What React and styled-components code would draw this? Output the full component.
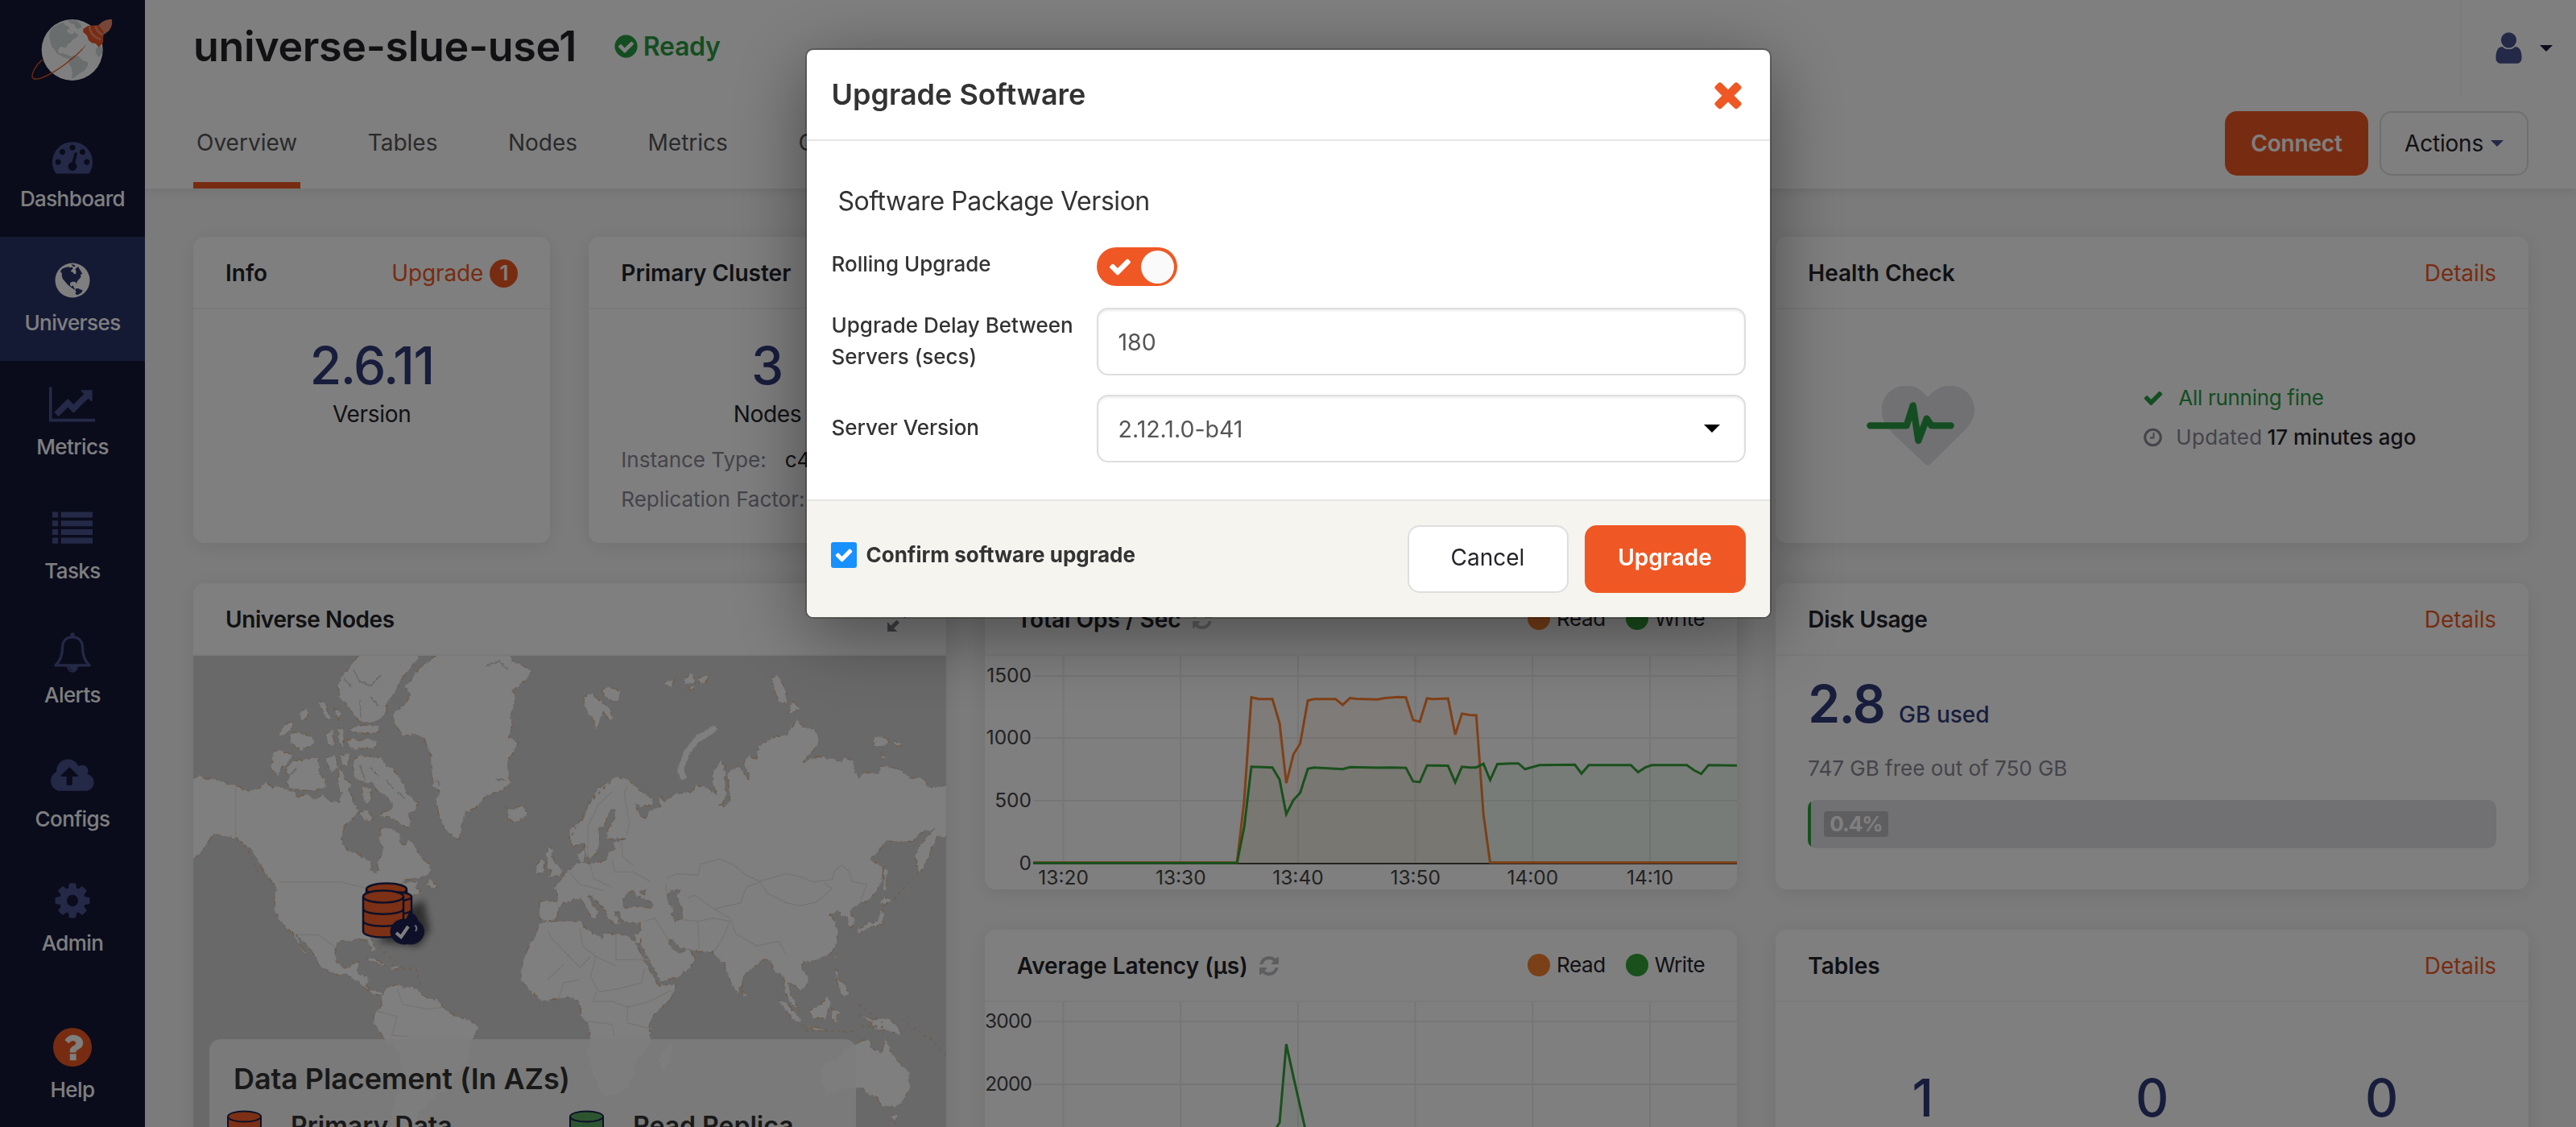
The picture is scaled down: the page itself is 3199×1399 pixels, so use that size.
import React from "react";
import styled, { createGlobalStyle } from "styled-components";

const Global = createGlobalStyle`
  *, *::before, *::after { box-sizing: border-box; }
  html, body, #root { margin: 0; height: 100%; }
  body {
    overflow: hidden;
    background: #f7f7f7;
    color: #232329;
    font-family: Inter, "Liberation Sans", sans-serif;
    font-size: 26px;
  }
  svg { display: block; flex: none; }
`;

const orange = "#ef5824";
const navy = "#303a78";
const green = "#289b42";
const muted = "#888894";

/* ---------- icons ---------- */

const ICONS = {
  dashboard: [1792, "M384 1152q0-53-37.5-90.5t-90.5-37.5-90.5 37.5-37.5 90.5 37.5 90.5 90.5 37.5 90.5-37.5 37.5-90.5zm192-448q0-53-37.5-90.5t-90.5-37.5-90.5 37.5-37.5 90.5 37.5 90.5 90.5 37.5 90.5-37.5 37.5-90.5zm428 481l101-382q6-26-7.5-48.5t-38.5-29.5-48 6.5-30 39.5l-101 382q-60 5-107 43.5t-63 98.5q-20 77 20 146t117 89 146-20 89-117q16-60-6-117t-72-91zm660-33q0-53-37.5-90.5t-90.5-37.5-90.5 37.5-37.5 90.5 37.5 90.5 90.5 37.5 90.5-37.5 37.5-90.5zm-640-640q0-53-37.5-90.5t-90.5-37.5-90.5 37.5-37.5 90.5 37.5 90.5 90.5 37.5 90.5-37.5 37.5-90.5zm448 192q0-53-37.5-90.5t-90.5-37.5-90.5 37.5-37.5 90.5 37.5 90.5 90.5 37.5 90.5-37.5 37.5-90.5zm320 448q0 261-141 483-19 29-54 29h-1402q-35 0-54-29-141-221-141-483 0-182 71-348t191-286 286-191 348-71 348 71 286 191 191 286 71 348z"],
  chart: [2048, "M2048 1536v128h-2048v-1536h128v1408h1920zm-128-1248v435q0 21-19.5 29.5t-35.5-7.5l-121-121-633 633q-10 10-23 10t-23-10l-233-233-416 416-192-192 585-585q10-10 23-10t23 10l233 233 464-464-121-121q-16-16-7.5-35.5t29.5-19.5h435q14 0 23 9t9 23z"],
  list: [1792, "M0 1312h256v256h-256zM0 928h256v256h-256zM0 544h256v256h-256zM0 160h256v256h-256zM384 1312h1408v256h-1408zM384 928h1408v256h-1408zM384 544h1408v256h-1408zM384 160h1408v256h-1408z"],
  cloud: [1920, "M1216 864q0-14-9-23l-352-352q-9-9-23-9t-23 9l-351 351q-10 12-10 24 0 14 9 23t23 9h224v352q0 13 9.5 22.5t22.5 9.5h192q13 0 22.5-9.5t9.5-22.5v-352h224q13 0 22.5-9.5t9.5-22.5zm704 288q0 159-112.5 271.5t-271.5 112.5h-1088q-185 0-316.5-131.5t-131.5-316.5q0-130 70-240t188-165q-2-30-2-43 0-212 150-362t362-150q156 0 285.5 87t188.5 231q71-62 166-62 106 0 181 75t75 181q0 76-41 138 130 31 213.5 135.5t83.5 238.5z"],
  cog: [1792, "M1152 896q0-106-75-181t-181-75-181 75-75 181 75 181 181 75 181-75 75-181zm512-109v222q0 12-8 23t-20 13l-185 28q-19 54-39 91 35 50 107 138 10 12 10 25t-9 23q-27 37-99 108t-94 71q-12 0-26-9l-138-108q-44 23-91 38-16 136-29 186-7 28-36 28h-222q-14 0-24.5-8.5t-11.5-21.5l-28-184q-49-16-90-37l-141 107q-10 9-25 9-14 0-25-11-126-114-165-168-7-10-7-23 0-12 8-23 15-21 51-66.5t54-70.5q-27-50-41-99l-183-27q-13-2-21-12.5t-8-23.5v-222q0-12 8-23t19-13l186-28q14-46 39-92-40-57-107-138-10-12-10-24 0-10 9-23 26-36 98.5-107.5t94.5-71.5q13 0 26 10l138 107q44-23 91-38 16-136 29-186 7-28 36-28h222q14 0 24.5 8.5t11.5 21.5l28 184q49 16 90 37l142-107q9-9 24-9 13 0 25 10 129 119 165 170 7 8 7 22 0 12-8 23-15 21-51 66.5t-54 70.5q26 50 41 98l183 28q13 2 21 12.5t8 23.5z"],
  refresh: [1792, "M1639 1056q0 5-1 7-64 268-268 434.5t-478 166.5q-146 0-282.5-55t-243.5-157l-129 129q-19 19-45 19t-45-19-19-45v-448q0-26 19-45t45-19h448q26 0 45 19t19 45-19 45l-137 137q71 66 161 102t187 36q134 0 250-65t186-179q11-17 53-117 8-23 30-23h192q13 0 22.5 9.5t9.5 22.5zm25-800v448q0 26-19 45t-45 19h-448q-26 0-45-19t-19-45 19-45l138-138q-148-137-349-137-134 0-250 65t-186 179q-11 17-53 117-8 23-30 23h-199q-13 0-22.5-9.5t-9.5-22.5v-7q65-268 270-434.5t480-166.5q146 0 284 55.5t245 156.5l130-129q19-19 45-19t45 19 19 45z"],
  check: [1792, "M1671 566q0 40-28 68l-724 724-136 136q-28 28-68 28t-68-28l-136-136-362-362q-28-28-28-68t28-68l136-136q28-28 68-28t68 28l294 295 656-657q28-28 68-28t68 28l136 136q28 28 28 68z"],
  close: [1792, "M1490 1322q0 40-28 68l-136 136q-28 28-68 28t-68-28l-294-294-294 294q-28 28-68 28t-68-28l-136-136q-28-28-28-68t28-68l294-294-294-294q-28-28-28-68t28-68l136-136q28-28 68-28t68 28l294 294 294-294q28-28 68-28t68 28l136 136q28 28 28 68t-28 68l-294 294 294 294q28 28 28 68z"],
  user: [1792, "M1536 1399q0 109-62.5 187t-150.5 78h-854q-88 0-150.5-78t-62.5-187q0-85 8.5-160.5t31.5-152 58.5-131 94-89 134.5-34.5q131 128 313 128t313-128q76 0 134.5 34.5t94 89 58.5 131 31.5 152 8.5 160.5zm-256-887q0 159-112.5 271.5t-271.5 112.5-271.5-112.5-112.5-271.5 112.5-271.5 271.5-112.5 271.5 112.5 112.5 271.5z"],
  checkCircle: [1792, "M1412 734q0-28-18-46l-91-90q-19-19-45-19t-45 19l-408 407-226-226q-19-19-45-19t-45 19l-91 90q-18 18-18 46 0 27 18 45l362 362q19 19 45 19 27 0 46-19l543-543q18-18 18-45zm252 162q0 209-103 385.5t-279.5 279.5-385.5 103-385.5-103-279.5-279.5-103-385.5 103-385.5 279.5-279.5 385.5-103 385.5 103 279.5 279.5 103 385.5z"],
};

function Icon({ name, size, color }) {
  const [w, d] = ICONS[name];
  return (
    <svg width={(w / 1792) * size} height={size} viewBox={`0 0 ${w} 1792`} fill={color}>
      <path d={d} />
    </svg>
  );
}

function GlobeIcon() {
  return (
    <svg width="44" height="50" viewBox="205 966 132 150">
      <circle cx="271" cy="1041" r="64.5" fill="#fff" />
      <g fill="#2b3468">
        <polygon points="226,1008 232,998 244,993 256,991 264,994 270,991 273,998 268,1002 264,1008 272,1010 276,1016 283,1018 285,1008 281,1000 287,994 292,990 298,1000 304,1010 308,1017 300,1020 303,1027 298,1034 292,1040 288,1046 287,1053 281,1046 270,1046 263,1050 262,1058 266,1064 274,1060 275,1066 279,1072 280,1076 272,1072 262,1064 252,1056 244,1046 235,1036 231,1024 232,1016" />
        <polygon points="266,981 278,983 282,990 274,990" />
        <polygon points="283,1072 292,1071 300,1075 309,1078 306,1085 298,1091 288,1096 281,1090 285,1084 281,1078" />
      </g>
    </svg>
  );
}

function BellIcon() {
  return (
    <svg width="50" height="50" viewBox="196 974 150 152" fill="none">
      <circle cx="271" cy="983" r="8" fill="#48528f" />
      <path
        stroke="#48528f"
        strokeWidth="10"
        strokeLinejoin="round"
        d="M271 992c-24 0-38 16-38 40 0 33-10 52-26 66h128c-16-14-26-33-26-66 0-24-14-40-38-40z"
      />
      <path fill="#48528f" d="M250 1102h42a21 23 0 0 1-42 0z" />
      <path stroke="#151838" strokeWidth="3" d="M257 1104a14 14 0 0 0 14 14" />
    </svg>
  );
}

function HelpIcon() {
  return (
    <svg width="50" height="50" viewBox="0 0 50 50">
      <circle cx="25" cy="25" r="24" fill={orange} />
      <path
        fill="#fff"
        d="M15.6 16.3C18.4 11.6 22 9.800 26.200 9.800c6.500 0 12 4.200 12 9.800 0 8-8.800 7.700-8.800 11.300v.6h-7.600v-2.300c0-5.300 7.500-6.200 7.500-9.300 0-1.800-1.600-2.900-3.600-2.900-2.200 0-3.600 1-5.200 3.300zM21.800 33.300h7.800v8h-7.800z"
      />
    </svg>
  );
}

function PlanetLogo() {
  return (
    <svg width="104" height="80" viewBox="114 66 312 240">
      <circle cx="269" cy="186" r="114" fill="#fff" />
      <g fill="#d3dbdc">
        <path d="M187 112l14-12 20-12 16-4 6 10 12 4 4 10-10 4 6 12 14 4 8-8 12 6 2 8-10 8-8 4-10 12-12 8-4 10-8 2-8-4-8 2-6 8 0 10 8 6 12-2 8 6 12 2 12 8-4 6-14-2-12-4-12-6-16-10-8-14-8-8-8-20-4-22z" />
        <path d="M252 78l16-4 20 4 12 12 4 12-14 6-10-6-4-12-14-4z" />
        <path d="M262 212l14-6 18 4 14 14 20 8-2 14-12 18-16 8-10 8-14 10-8 4 4-22-4-20-10-16 0-12z" />
        <path d="M360 178l16-6 6 14-2 14-12 12-10-12-2-12z" />
      </g>
      <path fill="none" stroke={orange} strokeWidth="4" d="M158 222c-30 26-46 62-34 70 18 12 90-26 142-72" />
      <path fill={orange} d="M262 220c24-18 42-36 60-56-12 20-34 42-58 60z" />
      <path fill="#f08c70" d="M366 96c12-16 30-24 50-24 4 14 0 32-12 44l-22 16-32-26z" />
      <path fill={orange} d="M310 108l18-12 40-2 18 24-2 40-16 18-12-14-14-2-12-10-6-18-14-12z" />
      <path fill="none" stroke="#f08c70" strokeWidth="9" d="M334 98c0 22 16 42 42 48M356 96c2 18 12 26 28 34" />
    </svg>
  );
}

/* ---------- sidebar ---------- */

const Page = styled.div`
  display: flex;
  height: 1399px;
  overflow: hidden;
`;

const Sidebar = styled.nav`
  display: flex;
  flex-direction: column;
  flex: none;
  width: 180px;
  background: #151838;
`;

const LogoBox = styled.div`
  flex: none;
  height: 140px;
  padding: 22px 0 0 38px;
`;

const NavItem = styled.a`
  display: flex;
  flex-direction: column;
  align-items: center;
  flex: none;
  gap: 12px;
  height: ${(p) => (p.$last ? 150 : 154)}px;
  padding-top: 29px;
  margin-top: ${(p) => (p.$last ? "28px" : 0)};
  background: ${(p) => (p.$active ? "#2b3468" : "transparent")};
  color: #fff;
  font-weight: 500;
  line-height: 32px;
  letter-spacing: -0.6px;
`;

const NAV = [
  ["Dashboard", <Icon name="dashboard" size={50} color="#48528f" />],
  ["Universes", <GlobeIcon />],
  ["Metrics", <Icon name="chart" size={50} color="#48528f" />],
  ["Tasks", <Icon name="list" size={50} color="#48528f" />],
  ["Alerts", <BellIcon />],
  ["Configs", <Icon name="cloud" size={50} color="#48528f" />],
  ["Admin", <Icon name="cog" size={50} color="#48528f" />],
  ["Help", <HelpIcon />],
];

/* ---------- header ---------- */

const Main = styled.div`
  flex: 1;
  display: flex;
  flex-direction: column;
  min-width: 0;
`;

const Header = styled.header`
  display: flex;
  flex-direction: column;
  justify-content: space-between;
  flex: none;
  height: 234px;
  background: #fff;
  box-shadow: 0 2px 14px rgba(0, 0, 0, 0.1);
`;

const TitleRow = styled.div`
  display: flex;
  height: 119px;
  padding-left: 57px;
`;

const Title = styled.h1`
  margin: 0;
  padding: 28px 0 0 3px;
  font-size: 52px;
  line-height: 60px;
  font-weight: 600;
  letter-spacing: -0.35px;
`;

const Status = styled.div`
  display: flex;
  align-items: center;
  gap: 5px;
  height: 40px;
  margin: 37px 0 0 45px;
  color: ${green};
  font-size: 32px;
  font-weight: 600;
  letter-spacing: -0.3px;
`;

const UserMenu = styled.div`
  display: flex;
  align-items: center;
  gap: 16px;
  width: 144px;
  margin-left: auto;
  padding-left: 36px;
  border-left: 2px solid #f4f4f6;
`;

const Caret = styled.span`
  width: 0;
  height: 0;
  border: ${(p) => p.$size}px solid transparent;
  border-top-color: ${(p) => p.$color};
  border-bottom: 0;
`;

const TabRow = styled.div`
  display: flex;
  height: 115px;
  padding: 0 59px 0 60px;
`;

const Tab = styled.a`
  margin-right: 79.5px;
  padding: 32px 4px 0;
  border-bottom: 8px solid ${(p) => (p.$active ? orange : "transparent")};
  color: #555;
  font-size: 28px;
  line-height: 52px;
`;

const HeaderButtons = styled.div`
  display: flex;
  gap: 14px;
  margin: 19px 0 0 auto;
`;

const HeaderButton = styled.button`
  display: flex;
  align-items: center;
  justify-content: center;
  gap: 9px;
  width: ${(p) => p.$width}px;
  height: 80px;
  padding: 0;
  border: 2px solid ${(p) => (p.$primary ? orange : "#dedee0")};
  border-radius: 15px;
  background: ${(p) => (p.$primary ? orange : "#fff")};
  color: ${(p) => (p.$primary ? "#fff" : "#232329")};
  font: ${(p) => (p.$primary ? 600 : 400)} 28px Inter, sans-serif;
  letter-spacing: -0.2px;
`;

/* ---------- cards ---------- */

const Content = styled.main`
  display: grid;
  grid-template-columns: repeat(3, 1fr);
  grid-auto-rows: 380px;
  gap: 50px 48px;
  padding: 60px 59px 0 60px;
`;

const Split = styled.div`
  display: grid;
  grid-template-columns: 1fr 1fr;
  gap: 48px;
`;

const Card = styled.section`
  display: flex;
  flex-direction: column;
  min-width: 0;
  overflow: hidden;
  border-radius: 14px;
  background: #fff;
`;

const Lift = styled.div`
  display: grid;
  grid-row: ${(p) => (p.$tall ? "span 2" : "auto")};
  min-width: 0;
  border-radius: 14px;
  box-shadow: 0 4px 26px rgba(0, 0, 0, 0.09);
`;

const CardHeader = styled.header`
  display: flex;
  align-items: center;
  justify-content: space-between;
  flex: none;
  height: 90px;
  padding: 0 40px;
  border-bottom: 2px solid #f4f4f6;
`;

const CardTitle = styled.h3`
  display: flex;
  align-items: center;
  gap: 12px;
  margin: 0;
  padding-top: 1px;
  font-size: 28px;
  line-height: 34px;
  font-weight: 600;
  letter-spacing: ${(p) => p.$tracking || 0}px;
`;

const CardLink = styled.a`
  display: flex;
  align-items: center;
  gap: 8px;
  padding-top: 2px;
  color: ${orange};
  font-size: 28px;
  line-height: 34px;
  letter-spacing: -0.1px;
`;

const CountBadge = styled.span`
  display: grid;
  place-items: center;
  width: 35px;
  height: 35px;
  border-radius: 50%;
  background: ${orange};
  color: #fff;
  font-size: 26px;
  font-weight: 600;
`;

const CenterBody = styled.div`
  display: flex;
  flex-direction: column;
  align-items: center;
  padding-top: 30px;
`;

const BigNumber = styled.div`
  color: ${navy};
  font-size: 64px;
  line-height: 80px;
  font-weight: 500;
  letter-spacing: ${(p) => p.$tracking || 0}px;
`;

const BigLabel = styled.div`
  font-size: 28px;
  line-height: 34px;
  margin-top: 3px;
  letter-spacing: -0.3px;
`;

const Facts = styled.dl`
  display: flex;
  flex-direction: column;
  margin: 15px 0 0;
  padding: 0 40px;
`;

const Fact = styled.div`
  display: flex;
  gap: 23px;
  line-height: 49px;
  white-space: nowrap;
`;

const Muted = styled.span`
  color: ${muted};
  letter-spacing: ${(p) => p.$tracking || 0}px;
`;

const HealthBody = styled.div`
  display: flex;
  align-items: center;
  gap: 206px;
  flex: 1;
  padding: 0 0 5px 110px;
`;

const HealthList = styled.div`
  display: flex;
  flex-direction: column;
  padding-bottom: 17px;
`;

const HealthRow = styled.div`
  display: flex;
  align-items: center;
  gap: ${(p) => p.$gap}px;
  height: 49px;
  color: ${(p) => p.$color};
  letter-spacing: ${(p) => p.$tracking || 0}px;
`;

const Strong = styled.span`
  margin-left: -9px;
  color: #232329;
  font-weight: 500;
`;

const DiskBody = styled.div`
  display: flex;
  flex-direction: column;
  padding: 20px 40px;
`;

const DiskUsed = styled.div`
  display: flex;
  align-items: baseline;
  gap: 18px;
  color: ${navy};
  font-size: 28px;
  font-weight: 500;
  line-height: 80px;
`;

const DiskValue = styled.span`
  font-size: 64px;
  font-weight: 600;
  letter-spacing: -1.6px;
`;

const DiskFree = styled.div`
  margin-top: 3px;
  line-height: 48px;
  color: ${muted};
`;

const DiskBar = styled.div`
  display: flex;
  align-items: center;
  gap: 16px;
  height: 60px;
  margin-top: 15px;
  overflow: hidden;
  border-radius: 10px;
  background: #e3e3e8;
`;

const DiskFill = styled.div`
  align-self: stretch;
  width: 4px;
  background: #2f9e3a;
`;

const DiskPercent = styled.span`
  padding: 0 7px;
  border-radius: 4px;
  background: #bdbdc0;
  color: #fff;
  font-weight: 700;
  line-height: 32px;
  letter-spacing: -1px;
`;

const TableCounts = styled.div`
  display: grid;
  grid-template-columns: repeat(3, 1fr);
  padding: 79px 40px 0;
  text-align: center;
`;

const Legend = styled.div`
  display: flex;
  align-items: center;
  gap: 25px;
`;

const LegendItem = styled.span`
  display: flex;
  align-items: center;
  gap: 8px;
  line-height: 34px;
  letter-spacing: -0.4px;
`;

const Dot = styled.i`
  width: 28px;
  height: 28px;
  border-radius: 50%;
  background: ${(p) => p.$color};
`;

/* ---------- charts ---------- */

const READ = "#ff8130";
const WRITE = "#32a038";

const opsRead = "130,787 527,787 541,605 555,299 570,304 596,304 610,375 623,552 637,467 650,436 665,308 677,304 719,304 733,321 747,301 760,303 801,305 815,301 842,298 856,299 870,366 883,371 897,302 911,304 938,302 952,409 965,347 980,351 993,352 1007,645 1020,787 1501,787";
const opsWrite = "130,788 527,788 541,683 555,504 596,506 610,542 623,644 637,602 650,581 665,510 677,506 733,511 747,505 801,507 828,506 856,507 870,547 883,549 897,500 938,501 952,550 965,504 980,506 993,506 1007,495 1020,543 1034,496 1061,494 1075,494 1088,511 1102,505 1116,499 1185,498 1198,524 1212,499 1294,499 1308,520 1322,506 1335,499 1403,499 1418,515 1431,525 1445,499 1501,500";
const latencyWrite = "600,785 605,544 610,532 623,300 637,397 659,544 675,690 700,780 1501,785";

const TICKS_X = ["13:20", "13:30", "13:40", "13:50", "14:00", "14:10"];

function Chart({ yTicks, series, height }) {
  return (
    <svg width="934.67" height={height} viewBox={`0 0 934.67 ${height}`}>
      <g stroke="#ececee" strokeWidth="2">
        {TICKS_X.map((t, i) => (
          <path key={t} d={`M${97.6 + i * 145.7} 0V257`} />
        ))}
        {yTicks.map((t) => (
          <path key={t.label} d={`M60 ${t.y}H935`} />
        ))}
      </g>
      <path d="M60 258H935" stroke="#444" strokeWidth="2" />
      <svg width="934.67" height="290" viewBox="36 176 1465.600 690" preserveAspectRatio="none">
        {series.map((s) => (
          <g key={s.color}>
            <polygon points={`${s.points} 1501,789 130,789`} fill={s.color} fillOpacity="0.07" />
            <polyline
              points={s.points}
              fill="none"
              stroke={s.color}
              strokeWidth="3"
              vectorEffect="non-scaling-stroke"
            />
          </g>
        ))}
      </svg>
      <g fill="#444" fontFamily="Inter, sans-serif" fontSize="24.500">
        {yTicks.map((t) => (
          <text key={t.label} x="58" y={t.y + 8.500} textAnchor="end" letterSpacing={t.tracking || 0}>
            {t.label}
          </text>
        ))}
        {TICKS_X.map((t, i) => (
          <text key={t} x={97.6 + i * 145.7} y="284" textAnchor="middle">
            {t}
          </text>
        ))}
      </g>
    </svg>
  );
}

function ChartCard({ title, ...chart }) {
  return (
    <Lift>
      <Card>
        <CardHeader>
          <CardTitle>
            {title}
            <Icon name="refresh" size={28} color="#bcbcc0" />
          </CardTitle>
          <Legend>
            <LegendItem><Dot $color="#f5812f" />Read</LegendItem>
            <LegendItem><Dot $color={WRITE} />Write</LegendItem>
          </Legend>
        </CardHeader>
        <Chart height={290} {...chart} />
      </Card>
    </Lift>
  );
}

/* ---------- map ---------- */

const WEST = [
  "0,435 25,427 45,435 80,437 125,453 160,458 200,477 240,470 272,450 300,465 320,462 350,472 378,480 385,495 430,487 445,505 480,490 510,510 545,512 550,490 570,470 590,490 600,520 615,540 590,570 565,590 553,620 555,650 580,672 610,680 640,697 660,705 662,730 680,747 690,735 685,710 700,690 708,665 695,640 697,600 725,595 750,605 768,615 770,645 790,652 800,640 815,640 830,665 850,695 880,715 885,740 865,750 845,760 790,765 775,778 820,770 835,775 825,790 845,800 835,812 800,820 790,850 770,865 745,890 700,920 660,945 665,965 678,990 670,998 655,975 650,962 620,958 600,955 590,965 560,962 535,970 528,1000 535,1035 560,1052 585,1050 595,1035 618,1032 610,1060 620,1075 645,1075 650,1090 645,1110 660,1125 690,1128 705,1135 695,1140 670,1135 640,1118 615,1095 590,1085 570,1072 540,1075 500,1060 465,1040 460,1020 430,985 400,955 385,945 395,970 425,1010 415,1005 390,970 372,940 350,925 325,900 305,865 303,820 310,790 290,765 262,738 240,700 215,665 190,650 165,632 130,625 105,622 75,615 50,650 20,685 -20,710 -20,435",
  "865,780 880,765 890,770 905,780 908,793 885,790",
  "600,375 625,360 660,365 700,370 720,395 750,410 780,450 795,485 835,515 825,545 800,545 810,570 805,597 775,585 745,565 720,560 695,558 705,545 735,540 745,520 715,490 690,480 670,450 620,445 600,430 595,400",
  "620,545 650,540 670,570 640,575",
  "345,400 370,380 410,375 440,370 465,370 470,420 490,440 495,465 440,475 410,475 370,470 345,450 360,430 345,415",
  "300,345 330,345 370,360 350,390 330,400 315,425 290,405",
  "370,285 400,290 440,300 455,320 400,345 365,320 360,300",
  "318,290 345,260 372,250 365,275 330,298",
  "400,215 425,210 425,240 400,250",
  "465,185 490,190 510,240 500,245 480,215",
  "525,205 550,225 540,245",
  "495,290 520,280 525,325 505,330",
  "540,270 560,280 560,335 545,320",
  "575,310 600,305 610,315 650,305 682,315 680,335 600,340 580,330",
  "580,275 630,262 690,265 690,285 650,290 600,285",
  "495,370 530,360 540,400 515,415 500,390",
  "550,360 585,355 575,395 555,390",
  "545,400 570,440 590,455 575,480 545,480 540,440",
  "630,460 660,470 665,500 645,520 630,490",
  "640,20 840,20 840,45 805,80 770,120 745,165 720,190 720,220 700,240 670,255 620,250 600,230 575,200 545,170 540,130 560,95 580,80 600,50",
  "845,75 880,55 920,20 1170,20 1190,55 1230,70 1262,85 1240,115 1190,150 1200,180 1180,240 1190,260 1175,300 1210,320 1190,355 1170,380 1175,420 1180,450 1150,475 1090,492 1055,530 1015,545 1000,590 990,633 960,620 935,595 915,555 905,500 920,480 895,460 890,420 885,360 860,305 825,290 785,298 750,260 745,225 790,195 810,160 790,140",
  "1160,528 1180,540 1225,525 1245,548 1225,568 1195,578 1170,565 1175,550",
  "705,1135 720,1118 755,1105 790,1115 830,1115 850,1135 870,1150 910,1155 935,1185 960,1200 1000,1215 1040,1225 1062,1245 1050,1270 1035,1290 1030,1340 1010,1380 970,1400 955,1440 935,1455 900,1465 905,1475 870,1490 875,1510 840,1520 830,1580 735,1580 745,1490 765,1440 770,1370 765,1320 720,1295 695,1260 670,1230 675,1200 700,1180",
  "640,1020 680,1022 720,1045 700,1040 660,1028",
  "735,1045 775,1050 760,1055 740,1055",
  "1325,655 1340,670 1335,690 1350,710 1375,735 1365,752 1325,755 1335,735 1320,725 1315,680",
  "1280,715 1300,700 1312,710 1305,740 1278,745",
];

const EAST = [
  "-90,835 -20,835 -25,800 -40,790 -10,770 0,745 20,735 45,715 60,710 52,680 75,665 80,690 70,710 105,712 140,705 160,700 165,680 190,668 185,645 235,630 165,632 162,605 190,565 195,540 175,537 162,560 155,585 130,600 135,640 122,680 98,697 85,690 75,645 35,657 22,630 25,600 70,570 100,510 130,465 200,430 240,440 290,480 330,500 330,520 290,530 265,515 285,560 305,565 320,540 360,530 355,490 375,510 420,485 480,478 495,455 540,470 570,490 555,450 560,410 585,380 600,395 600,440 605,490 590,520 575,525 600,527 620,510 618,480 610,420 650,395 690,440 695,430 670,385 690,365 720,370 725,330 790,300 830,295 850,270 870,245 895,270 930,275 950,300 945,330 885,385 945,365 1000,370 1035,385 1045,365 1080,380 1085,415 1100,435 1120,415 1175,420 1180,395 1220,400 1260,410 1290,435 1340,435 1360,465 1445,460 1445,625 1390,625 1370,665 1355,700 1325,745 1315,710 1310,680 1340,640 1385,595 1370,610 1345,605 1320,620 1300,640 1200,640 1170,675 1140,700 1175,715 1190,730 1185,770 1160,810 1130,835 1105,840 1065,865 1085,900 1075,920 1060,915 1055,885 1035,880 1020,865 990,880 1005,890 1020,930 1020,960 1000,1000 960,1020 920,1030 895,1030 885,1050 910,1080 910,1105 880,1125 860,1105 835,1100 845,1140 870,1175 875,1190 850,1170 830,1140 820,1090 815,1070 790,1070 770,1025 740,1025 700,1055 668,1075 665,1110 645,1132 625,1100 605,1060 600,1030 585,1030 555,1000 500,998 460,990 430,985 405,960 392,960 400,985 430,1005 465,990 490,1022 470,1050 430,1080 360,1097 340,1060 290,980 275,965 285,945 285,905 235,905 215,895 210,870 190,870 200,890 210,910 190,905 170,895 150,860 120,830 95,815 90,820 110,850 130,865 120,890 105,890 85,855 60,825 35,830 0,840 -20,860 -25,890 -60,900 -90,890",
  "-90,905 -40,900 0,900 70,900 75,920 145,955 150,940 190,940 240,948 265,965 290,1010 320,1060 355,1110 420,1105 400,1150 330,1210 318,1240 325,1300 280,1345 270,1380 240,1440 200,1465 145,1467 110,1400 85,1320 100,1280 95,1240 65,1205 60,1160 20,1148 -10,1150 -80,1160 -120,1130 -160,1090 -155,1040 -130,980 -100,940",
  "265,940 290,940 285,975 268,968",
  "75,170 105,160 145,190 165,200 185,240 170,250 150,215 125,275 105,240 80,205",
  "140,150 165,138 210,150 205,180 180,185 150,165",
  "775,110 795,100 815,125 830,160 830,195 800,185 785,150",
  "835,225 855,185 880,210",
  "370,125 415,112 400,140", "450,110 480,95 490,125 455,130", "500,110 540,102 530,125 505,125", "460,140 490,135 480,150",
  "1155,300 1190,300 1215,315 1190,330 1155,330",
  "1230,315 1265,325 1240,333", "1180,355 1205,372 1185,372",
  "365,1320 408,1290 400,1350 375,1388 355,1370",
  "665,1125 680,1140 670,1147",
  "798,1155 830,1165 880,1215 885,1235 850,1215",
  "885,1240 950,1245 990,1257 950,1255",
  "915,1190 950,1175 985,1145 995,1165 975,1215 930,1215",
  "1000,1185 1030,1195 1015,1210 1020,1230 1000,1220",
  "1100,1205 1150,1220 1210,1215 1240,1240 1260,1270 1210,1255 1160,1250 1140,1225",
  "1010,1055 1022,1060 1020,1085 1050,1110 1060,1135 1040,1145 1020,1100",
  "1010,1010 1018,1005 1012,1020",
  "1195,820 1220,830 1195,848 1180,838",
  "1185,860 1192,880 1185,910 1140,920 1100,940 1095,930 1135,905 1170,900 1180,870",
  "1195,720 1205,740 1200,800 1192,800",
  "955,1370 1000,1350 1030,1340 1050,1310 1090,1300 1110,1285 1145,1290 1140,1310 1185,1328 1200,1280 1215,1320 1240,1350 1285,1390 1290,1440 1260,1490 1230,1503 1185,1500 1160,1465 1145,1470 1110,1440 1040,1445 970,1470",
  "1217,1530 1245,1530 1235,1555",
];

const SEAS = [
  "220,840 230,815 255,800 275,820 300,825 335,845 330,857 270,852 240,858 222,855",
  "280,805 310,795 300,815",
  "385,820 400,798 435,800 420,820 440,850 445,890 415,898 400,880 410,860 390,840",
];

const BORDERS =
  "M385,760 420,745 500,750 510,715 580,697 630,715 680,750 730,770 M380,775 385,810 M730,770 830,745 880,755 930,772 1000,765 1010,735 1035,718 1060,735 1075,770 1130,780 1105,835 M730,770 760,810 830,840 880,850 940,838 1000,795 970,775 M730,772 680,790 660,840 560,860 490,815 460,825 M560,860 620,890 640,940 720,980 800,965 830,1010 M500,900 560,890 620,900 590,960 560,1000 M440,895 500,900 505,990 M300,900 340,890 390,960 M60,920 70,980 120,1015 195,1045 M195,945 195,1025 320,1025 M120,1015 100,1080 130,1130 200,1120 290,1100 300,1055 M120,1130 110,1160 180,1160 240,1180 320,1160 400,1125 M240,1170 235,1230 330,1250 M85,1225 180,1235 190,1275 M-60,930 -40,960 60,1050 100,1015 M-60,1090 0,1040 M-20,1150 0,1100 60,1090 M180,700 190,740 260,740 320,770 M100,715 110,760 180,790 M20,740 60,780 150,800 M215,640 220,690 260,720 M90,690 90,590 130,520 180,480 M235,620 245,580 225,480 240,460";

const MapFrame = styled.div`
  position: relative;
  flex: 1;
  overflow: hidden;
  background: #d3d3d3;
`;

const MapPin = styled.div`
  position: absolute;
  left: 205px;
  top: 278px;
`;

const MapLegend = styled.div`
  position: absolute;
  left: 20px;
  top: 476px;
  display: flex;
  flex-direction: column;
  gap: 17px;
  width: 803px;
  height: 200px;
  padding: 27px 14px 0 22px;
  border-radius: 14px;
  background: rgba(249, 249, 249, 0.87);
  color: #333;
`;

const MapLegendTitle = styled.h3`
  margin: 0 0 0 8px;
  font-size: 36px;
  line-height: 44px;
  font-weight: 600;
  letter-spacing: -0.1px;
`;

const MapLegendRow = styled.div`
  display: grid;
  grid-template-columns: 425px 1fr;
`;

const MapLegendItem = styled.div`
  display: flex;
  gap: 36px;
  font-size: 32px;
  line-height: 39px;
  font-weight: 600;
`;

function Cylinder({ color }) {
  return (
    <svg width="43" height="60" viewBox="0 0 43 60" fill={color} stroke="#1b2150" strokeWidth="2">
      <path d="M1 8v44c0 9 41 9 41 0V8" />
      <ellipse cx="21.5" cy="8" rx="20.500" ry="6.500" />
    </svg>
  );
}

function WorldMap() {
  return (
    <svg width="934.67" height="585" viewBox="0 37 2804 1531.600" preserveAspectRatio="none">
      <filter id="coast" x="0" y="0" width="100%" height="100%">
        <feTurbulence type="fractalNoise" baseFrequency="0.09" numOctaves="2" seed="4" />
        <feDisplacementMap in="SourceGraphic" scale="11" xChannelSelector="R" yChannelSelector="G" />
      </filter>
      <g filter="url(#coast)">
        <g fill="#fff" stroke="#d9bb9c" strokeWidth="4" strokeDasharray="14 26 30 18 8 30">
          {WEST.map((p) => <polygon key={p} points={p} />)}
          <g transform="translate(1380 0)">
            {EAST.map((p) => <polygon key={p} points={p} />)}
            <g fill="#d3d3d3">{SEAS.map((p) => <polygon key={p} points={p} />)}</g>
          </g>
        </g>
        <path
          fill="none"
          stroke="#fff"
          strokeWidth="22"
          strokeLinejoin="round"
          strokeLinecap="round"
          d="M1825,430L1815,405 1840,350 1875,310 1940,275"
        />
        <path fill="none" stroke="#d3d3d3" strokeWidth="5" d="M595,80L620,120 660,135 700,100M620,180L625,240M660,170L690,200M1090,70L1140,55 1170,80M1125,440L1165,440M350,430L385,405M620,390L640,440M660,400L690,430M760,480L790,500M720,440L745,470M560,110L590,140M905,440L920,460" />
        <g fill="none" stroke="#d6bfa6" strokeWidth="5" strokeDasharray="10 14">
          <path d="M190,650L240,735 310,785M690,985L750,1030M780,1052L830,1055 845,1110M2480,1170L2570,1230M2490,1240L2580,1245M2640,1220L2760,1290 2810,1340M1480,815L1550,880M2610,830L2700,740M1410,620L1480,510 1560,440M2280,1255L2470,1260" />
        </g>
      </g>
      <g fill="none" stroke="#efebe6" strokeWidth="4">
        <path d="M158,460V628M318,772H550L640,792M385,943L470,945 530,985M760,1120L780,1170 870,1185 930,1180M680,1190L760,1210 740,1270 800,1275" />
        <path transform="translate(1380 0)" d={BORDERS} />
      </g>
    </svg>
  );
}

function ClusterPin() {
  return (
    <svg width="100" height="96" viewBox="-5 -3 100 96">
      <defs>
        <filter id="pinShadow" x="-50%" y="-50%" width="200%" height="200%">
          <feGaussianBlur stdDeviation="5" />
        </filter>
      </defs>
      <path d="M50 36L76 22 84 60 70 80 20 74z" fill="#000" opacity="0.55" filter="url(#pinShadow)" />
      <g fill="#f9602a" stroke="#1b2150" strokeWidth="2.500">
        <path d="M5 9V30H55V9" />
        <ellipse cx="30" cy="9" rx="25" ry="7.500" />
        <path d="M13 18V60c0 9 48 9 48 0V18" />
        <ellipse cx="37" cy="18" rx="24" ry="6" />
        <path fill="none" d="M50 39c6 0 11-3 11-4M50 53c6 0 11-3 11-4" />
        <path d="M1 18v43c0 10 50 10 50 0V18" />
        <ellipse cx="26" cy="18" rx="25" ry="7.500" />
        <path fill="none" d="M1 33c0 9 50 9 50 0M1 48c0 9 50 9 50 0" />
      </g>
      <path d="M58 38c8 0 11 7 12 12H52z" fill="#1b2150" />
      <ellipse cx="60" cy="61.500" rx="17" ry="16" fill="#1b2150" />
      <ellipse cx="52" cy="61.500" rx="17.500" ry="16" fill="#1b2150" />
      <path d="M42 63l6 5 9-13" fill="none" stroke="#fff" strokeWidth="4" />
      <path d="M65 54c3 1 3 4 1 7" fill="none" stroke="#dde" strokeWidth="2" />
    </svg>
  );
}

/* ---------- modal ---------- */

const Backdrop = styled.div`
  position: fixed;
  inset: 0;
  display: flex;
  justify-content: center;
  align-items: flex-start;
  padding-top: 60px;
  background: rgba(0, 0, 0, 0.5);
`;

const Dialog = styled.form`
  display: flex;
  flex-direction: column;
  width: 1200px;
  height: 708px;
  border: 2px solid rgba(0, 0, 0, 0.25);
  border-radius: 10px;
  background: #fff;
  background-clip: padding-box;
  box-shadow: 0 20px 90px rgba(0, 0, 0, 0.42);
  color: #333;
  overflow: hidden;
`;

const DialogHeader = styled.header`
  display: flex;
  align-items: center;
  justify-content: space-between;
  flex: none;
  height: 113px;
  padding: 0 27px 2px 31px;
  border-bottom: 2px solid #e5e5e5;
`;

const DialogTitle = styled.h2`
  margin: 0;
  font-size: 36px;
  font-weight: 600;
  line-height: 44px;
`;

const DialogBody = styled.div`
  display: flex;
  flex-direction: column;
  flex: 1;
  padding: 56px 30px 0 31px;
`;

const SectionTitle = styled.div`
  padding-left: 8px;
  font-size: 32px;
  line-height: 38px;
  letter-spacing: -0.45px;
`;

const Field = styled.div`
  display: grid;
  grid-template-columns: 329px 1fr;
  margin-top: ${(p) => p.$top}px;
`;

const FieldLabel = styled.label`
  padding-top: ${(p) => p.$pad || 0}px;
  font-weight: 500;
  line-height: 39px;
`;

const Toggle = styled.span`
  display: flex;
  align-items: center;
  justify-content: space-between;
  width: 100px;
  height: 48px;
  padding: 0 4px 0 14px;
  border-radius: 24px;
  background: ${orange};
`;

const Thumb = styled.i`
  width: 41px;
  height: 41px;
  border-radius: 50%;
  background: #fafafa;
`;

const Control = styled.div`
  display: flex;
  align-items: center;
  justify-content: space-between;
  height: 84px;
  padding: 0 30px 0 25px;
  border: 2px solid #dedee0;
  border-radius: 14px;
  box-shadow: inset 0 2px 3px rgba(0, 0, 0, 0.075);
  color: #555;
  font-size: 28.5px;
`;

const DialogFooter = styled.footer`
  display: flex;
  align-items: center;
  flex: none;
  gap: 20px;
  height: 146px;
  padding: 0 30px 1px 30px;
  border-top: 2px solid #e5e5e5;
  background: #f5f4ef;
`;

const Confirm = styled.label`
  display: flex;
  align-items: center;
  gap: 12px;
  margin: 0 auto 10px 0;
  font-weight: 700;
  line-height: 32px;
`;

const Checkbox = styled.span`
  display: grid;
  place-items: center;
  width: 32px;
  height: 32px;
  border-radius: 3px;
  background: #1890ff;
`;

const DialogButton = styled.button`
  width: 200px;
  height: 84px;
  padding: 0 0 4px;
  border: 2px solid ${(p) => (p.$primary ? orange : "#dedee0")};
  border-radius: 15px;
  background: ${(p) => (p.$primary ? orange : "#fff")};
  color: ${(p) => (p.$primary ? "#fff" : "#232329")};
  font: ${(p) => (p.$primary ? 600 : 400)} 28px Inter, sans-serif;
`;

function UpgradeDialog() {
  return (
    <Backdrop>
      <Dialog>
        <DialogHeader>
          <DialogTitle>Upgrade Software</DialogTitle>
          <Icon name="close" size={50} color={orange} />
        </DialogHeader>
        <DialogBody>
          <SectionTitle>Software Package Version</SectionTitle>
          <Field $top={38}>
            <FieldLabel $pad={1}>Rolling Upgrade</FieldLabel>
            <Toggle>
              <Icon name="check" size={30} color="#fff" />
              <Thumb />
            </Toggle>
          </Field>
          <Field $top={27}>
            <FieldLabel $pad={2}>Upgrade Delay Between Servers (secs)</FieldLabel>
            <Control>180</Control>
          </Field>
          <Field $top={24}>
            <FieldLabel $pad={21}>Server Version</FieldLabel>
            <Control>
              2.12.1.0-b41
              <Caret $size={10} $color="#000" />
            </Control>
          </Field>
        </DialogBody>
        <DialogFooter>
          <Confirm>
            <Checkbox><Icon name="check" size={24} color="#fff" /></Checkbox>
            Confirm software upgrade
          </Confirm>
          <DialogButton type="button">Cancel</DialogButton>
          <DialogButton type="button" $primary>Upgrade</DialogButton>
        </DialogFooter>
      </Dialog>
    </Backdrop>
  );
}

export default function App() {
  return (
    <>
      <Global />
      <Page>
        <Sidebar>
          <LogoBox><PlanetLogo /></LogoBox>
          {NAV.map(([label, icon]) => (
            <NavItem key={label} $active={label === "Universes"} $last={label === "Help"}>
              {icon}
              {label}
            </NavItem>
          ))}
        </Sidebar>
        <Main>
          <Header>
            <TitleRow>
              <Title>universe-slue-use1</Title>
              <Status>
                <Icon name="checkCircle" size={33} color={green} />
                Ready
              </Status>
              <UserMenu>
                <Icon name="user" size={45} color="#48528f" />
                <Caret $size={8} $color="#151838" />
              </UserMenu>
            </TitleRow>
            <TabRow>
              {["Overview", "Tables", "Nodes", "Metrics", "Queries"].map((t) => (
                <Tab key={t} $active={t === "Overview"}>{t}</Tab>
              ))}
              <HeaderButtons>
                <HeaderButton $primary $width={178}>Connect</HeaderButton>
                <HeaderButton $width={185}>
                  Actions
                  <Caret $size={8} $color="#48528f" />
                </HeaderButton>
              </HeaderButtons>
            </TabRow>
          </Header>
          <Content>
            <Split>
              <Lift>
                <Card>
                  <CardHeader>
                    <CardTitle>Info</CardTitle>
                    <CardLink>Upgrade<CountBadge>1</CountBadge></CardLink>
                  </CardHeader>
                  <CenterBody>
                    <BigNumber $tracking={-1.4}>2.6.11</BigNumber>
                    <BigLabel>Version</BigLabel>
                  </CenterBody>
                </Card>
              </Lift>
              <Lift>
                <Card>
                  <CardHeader>
                    <CardTitle>Primary Cluster</CardTitle>
                  </CardHeader>
                  <CenterBody>
                    <BigNumber>3</BigNumber>
                    <BigLabel>Nodes</BigLabel>
                  </CenterBody>
                  <Facts>
                    <Fact><Muted>Instance Type:</Muted><span>c4.large</span></Fact>
                    <Fact><Muted>Replication Factor:</Muted><span>3</span></Fact>
                  </Facts>
                </Card>
              </Lift>
            </Split>
            <div />
            <Lift>
              <Card>
                <CardHeader>
                  <CardTitle>Health Check</CardTitle>
                  <CardLink>Details</CardLink>
                </CardHeader>
                <HealthBody>
                  <svg width="140" height="102" viewBox="45 110 420 306">
                    <path
                      fill="#e3e3e8"
                      d="M282 160c-24-26-44-42-78-42-58 0-94 40-94 92 0 40 20 62 50 94l112 106q10 8 20 0l108-106c32-32 56-56 56-94 0-54-38-92-92-92-36 0-58 18-82 42z"
                    />
                    <path
                      fill="none"
                      stroke={green}
                      strokeWidth="25"
                      strokeLinecap="round"
                      strokeLinejoin="round"
                      d="M67 267H203L227 192 247 323 278 241 296 267H368"
                    />
                  </svg>
                  <HealthList>
                    <HealthRow $color={green} $gap={18} $tracking={-0.3}>
                      <Icon name="check" size={26} color={green} />
                      All running fine
                    </HealthRow>
                    <HealthRow $color={muted} $gap={15}>
                      <svg width="26" height="26" viewBox="0 0 26 26" fill="none" stroke={muted}>
                        <circle cx="12.500" cy="13" r="9.800" strokeWidth="3" />
                        <path d="M13.500 7v6.500H9" strokeWidth="1.800" />
                      </svg>
                      <Muted $tracking={0.3}>Updated</Muted>
                      <Strong>17 minutes ago</Strong>
                    </HealthRow>
                  </HealthList>
                </HealthBody>
              </Card>
            </Lift>

            <Lift $tall>
              <Card>
                <CardHeader>
                  <CardTitle $tracking={-0.4}>Universe Nodes</CardTitle>
                  <svg width="33" height="33" viewBox="0 0 33 33" fill="#808088">
                    <path d="M0 32V20l4.500 4.500 7-7 3.500 3.500-7 7 4.500 4z" />
                    <path d="M33 1v12l-4.500-4.500-7 7-3.500-3.500 7-7L20.500 1z" />
                  </svg>
                </CardHeader>
                <MapFrame>
                  <WorldMap />
                  <MapPin><ClusterPin /></MapPin>
                  <MapLegend>
                    <MapLegendTitle>Data Placement (In AZs)</MapLegendTitle>
                    <MapLegendRow>
                      <MapLegendItem><Cylinder color="#f9602a" />Primary Data</MapLegendItem>
                      <MapLegendItem><Cylinder color="#5aa860" />Read Replica</MapLegendItem>
                    </MapLegendRow>
                  </MapLegend>
                </MapFrame>
              </Card>
            </Lift>
            <ChartCard
              title="Total Ops / Sec"
              yTicks={[
                { label: "1500", y: 25 },
                { label: "1000", y: 102 },
                { label: "500", y: 180 },
                { label: "0", y: 258 },
              ]}
              series={[{ color: READ, points: opsRead }, { color: WRITE, points: opsWrite }]}
            />
            <Lift>
              <Card>
                <CardHeader>
                  <CardTitle $tracking={-0.4}>Disk Usage</CardTitle>
                  <CardLink>Details</CardLink>
                </CardHeader>
                <DiskBody>
                  <DiskUsed><DiskValue>2.8</DiskValue>GB used</DiskUsed>
                  <DiskFree>747 GB free out of 750 GB</DiskFree>
                  <DiskBar>
                    <DiskFill />
                    <DiskPercent>0.4%</DiskPercent>
                  </DiskBar>
                </DiskBody>
              </Card>
            </Lift>

            <ChartCard
              title="Average Latency (µs)"
              yTicks={[
                { label: "3000", y: 24, tracking: -0.9 },
                { label: "2000", y: 102, tracking: -0.9 },
              ]}
              series={[{ color: WRITE, points: latencyWrite }]}
            />
            <Lift>
              <Card>
                <CardHeader>
                  <CardTitle>Tables</CardTitle>
                  <CardLink>Details</CardLink>
                </CardHeader>
                <TableCounts>
                  <BigNumber>1</BigNumber>
                  <BigNumber>0</BigNumber>
                  <BigNumber>0</BigNumber>
                </TableCounts>
              </Card>
            </Lift>
          </Content>
        </Main>
      </Page>
      <UpgradeDialog />
    </>
  );
}
